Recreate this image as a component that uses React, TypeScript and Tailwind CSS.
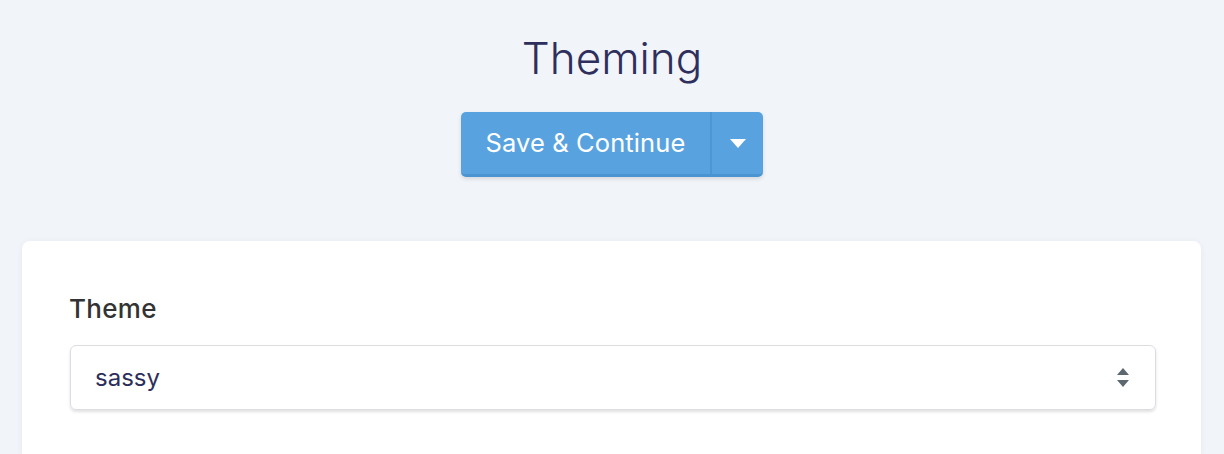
export default function App() {
	return (
		<div className="h-[454px] bg-[#f1f4f9] font-['Inter',sans-serif] flex flex-col items-center overflow-hidden">
			<h1 className="mt-[26px] text-[44px] leading-[64px] font-light text-[#2e2f5c]">
				Theming
			</h1>
			<div className="mt-[22px] flex h-[65px] rounded-[5px] bg-[#58a3df] shadow-[0_2px_4px_rgba(0,0,0,0.12)] border-b-[3px] border-[#4a94d2] text-white">
				<button className="w-[251px] text-[25.5px] font-normal tracking-[0.1px] border-r-2 border-[#4f97d4]">
					Save &amp; Continue
				</button>
				<button className="w-[51px] flex items-center justify-center" aria-label="More">
					<svg width="16" height="9" viewBox="0 0 16 9">
						<path d="M0 0 H16 L8 9 Z" fill="white" />
					</svg>
				</button>
			</div>
			<div className="mt-[64px] w-[1179px] ml-[-1px] h-[213px] bg-white rounded-t-[8px] shadow-[0_1px_6px_rgba(30,40,80,0.06)] px-[47px] pt-[52px]">
				<label className="block text-[26px] font-medium text-[#333] leading-[32px] tracking-[0.3px]">
					Theme
				</label>
				<div className="mt-[20px] h-[65px] w-[1086px] ml-[1px] rounded-[6px] border border-[#dcdde3] shadow-[0_2px_3px_rgba(0,0,0,0.12)] flex items-center justify-between pl-[24px] pr-[26px]">
					<span className="text-[24px] text-[#2c2e5c]">sassy</span>
					<svg width="12" height="19" viewBox="0 0 12 19">
						<path d="M6 0 L12 7 H0 Z" fill="#5d6770" />
						<path d="M0 12 H12 L6 19 Z" fill="#5d6770" />
					</svg>
				</div>
			</div>
		</div>
	);
}
